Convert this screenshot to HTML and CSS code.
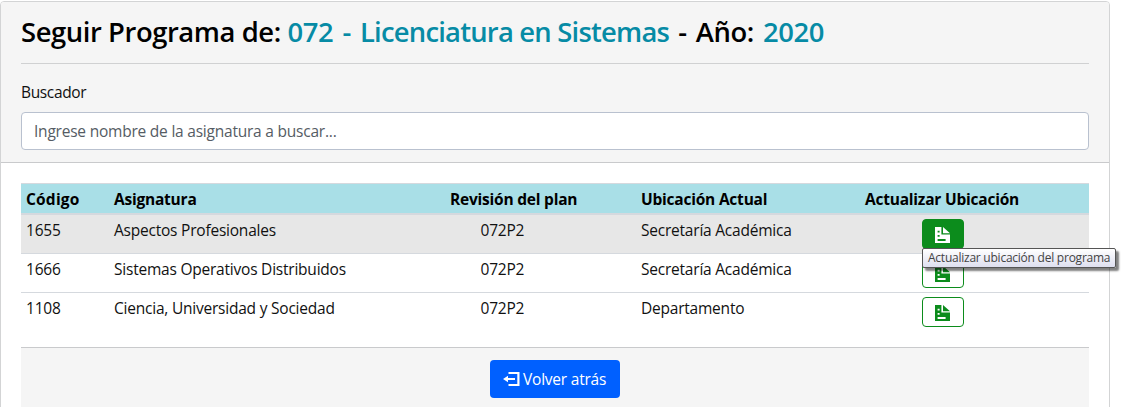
FILE: index.html
```html
<!DOCTYPE html>
<html lang="es">
<head>
<meta charset="utf-8">
<title>Seguir Programa</title>
<link rel="stylesheet" href="styles.css">
</head>
<body>
<svg class="defs" width="0" height="0">
  <symbol id="doc" viewBox="0 0 15 16"><path fill-rule="evenodd" d="M0 0H6.4V7.4H15V16H0ZM2.6 3.7V5.4H4.6V3.7ZM2.6 8V9.8H4.6V8ZM2.6 12V14H10.6V12ZM8 0L15 6.2H8Z"/></symbol>
</svg>
<main class="card">
  <header class="card-header">
    <h1 class="title">Seguir Programa de: <span class="wide"><b>072 - <span class="degree">Licenciatura en Sistemas</span></b> - Año: <b>2020</b></span></h1>
    <label class="label" for="q"><span>Buscador</span></label>
    <input class="search" id="q" type="text" placeholder="Ingrese nombre de la asignatura a buscar...">
  </header>
  <section class="card-body">
    <div class="row head"><span class="code">Código</span><span>Asignatura</span><span>Revisión del plan</span><span>Ubicación Actual</span><span>Actualizar Ubicación</span></div>
    <div class="row hovered"><span>1655</span><span>Aspectos Profesionales</span><span class="plan">072P2</span><span>Secretaría Académica</span>
      <div class="action"><button class="btn active"><svg class="doc"><use href="#doc"/></svg></button><div class="tooltip">Actualizar ubicación del programa</div></div></div>
    <div class="row"><span>1666</span><span>Sistemas Operativos Distribuidos</span><span class="plan">072P2</span><span>Secretaría Académica</span>
      <div class="action"><button class="btn"><svg class="doc"><use href="#doc"/></svg></button></div></div>
    <div class="row"><span>1108</span><span>Ciencia, Universidad y Sociedad</span><span class="plan">072P2</span><span>Departamento</span>
      <div class="action"><button class="btn"><svg class="doc"><use href="#doc"/></svg></button></div></div>
    <footer class="card-footer"><button class="back"><svg class="exit" viewBox="0 0 17 14"><path d="M5.5 0H16.5V14H5.5V12H14.3V2H5.5ZM0 7L5 3.7V6.1H12V7.9H5V10.3Z"/></svg><span>Volver atrás</span></button></footer>
  </section>
</main>
</body>
</html>
```
FILE: styles.css
```css
* { box-sizing: border-box; }
body { margin: 0; padding-top: 1px; height: 407px; overflow: hidden; background: #fff; color: #111; font: 15.5px/24px "Open Sans", "Noto Sans", sans-serif; letter-spacing: -0.22px; }
.defs { display: block; width: 0; height: 0; }
.card { width: 1110px; height: 420px; border: 1px solid #d3d4d5; border-radius: 4px 4px 0 0; }
.card-header { height: 161px; padding: 12px 20px 0; background: #f5f5f5; border-bottom: 1px solid #c9cacc; border-radius: 3px 3px 0 0; }
.title { height: 50px; margin: 0; border-bottom: 1px solid #d0d1d2; font-size: 27.4px; font-weight: 600; line-height: 35px; letter-spacing: -0.42px; color: #000; white-space: nowrap; }
.title b { font-weight: 600; color: #078ba5; }
.wide { word-spacing: 2.5px; }
.degree { letter-spacing: -0.78px; word-spacing: 0; }
.label { display: block; height: 48px; padding-top: 16px; }
.label span { letter-spacing: -0.35px; }
.search { display: block; width: 1068px; height: 38px; padding: 0 12px; border: 1px solid #b9c1cf; border-radius: 4px; background: #fff; font: inherit; letter-spacing: inherit; }
.search::placeholder { color: #555c64; opacity: 1; }
.card-body { padding: 20px 20px 0; }
.row { display: grid; grid-template-columns: 88px 336px 191px 224px 1fr; height: 39px; padding: 3px 0 0 5px; border-top: 1px solid #d5d9de; white-space: nowrap; }
.row.head { height: 30px; background: #a9dfe7; font-weight: 700; color: #000; letter-spacing: -0.22px; }
.code { letter-spacing: 0.2px; }
.row.hovered { height: 40px; border-top-width: 2px; background: #e7e7e7; }
.plan { padding-left: 30.5px; }
.action { position: relative; height: 30px; padding-left: 57px; margin-top: 1px; }
.btn { display: flex; align-items: center; justify-content: center; width: 42px; height: 30px; padding: 0 2px 0 0; border: 1px solid #0c8c1c; border-radius: 4px; background: #fff; color: #0c8c1c; }
.btn.active { background: #0c8c1c; color: #fff; }
.doc { width: 15px; height: 16px; margin-top: 2px; fill: currentColor; }
.tooltip { position: absolute; z-index: 2; left: 57px; top: 29px; width: 194px; height: 20px; padding-left: 5px; border: 1px solid #555; border-radius: 2px; background: linear-gradient(#fff, #dedfef); box-shadow: 3px 3px 2px rgba(0,0,0,.5); color: #444; font-size: 12px; line-height: 18px; letter-spacing: -0.24px; }
.card-footer { height: 72px; margin-top: 16px; padding-top: 12px; border-top: 1px solid #c9cacc; background: #f5f5f5; }
.back { display: flex; align-items: center; width: 130px; height: 38px; margin: 0 auto; padding: 0 0 0 13px; gap: 3px; border: 0; border-radius: 4px; background: #0060ff; color: #fff; font: inherit; letter-spacing: inherit; white-space: nowrap; }
.exit { width: 17px; height: 14px; fill: #fff; }
```
